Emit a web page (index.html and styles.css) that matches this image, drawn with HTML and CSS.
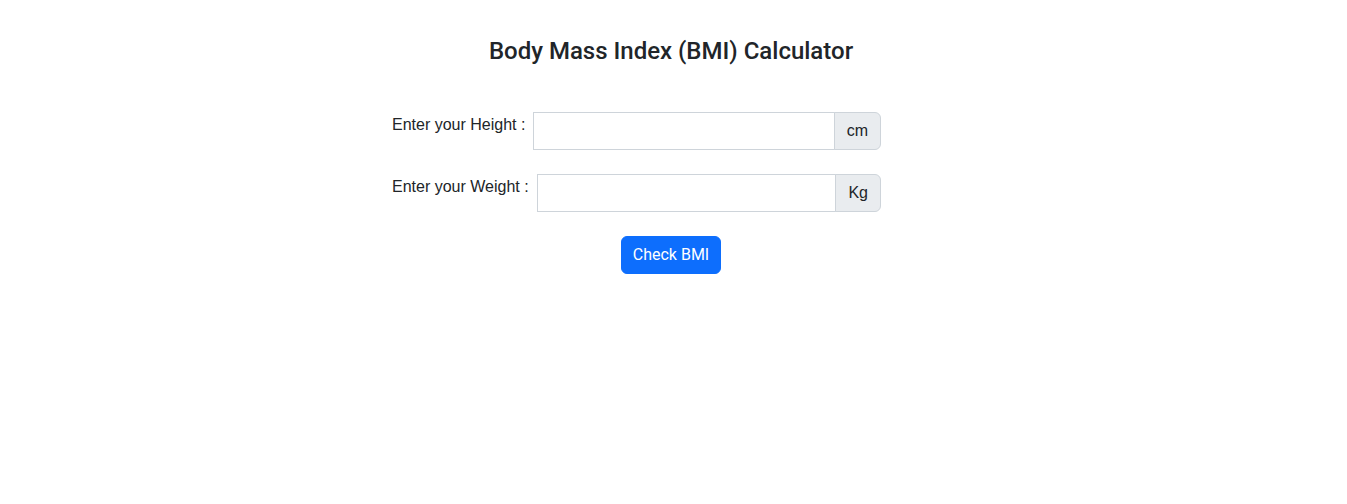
FILE: index.html
```html
<!DOCTYPE html>
<html lang="en">
<head>
<meta charset="utf-8">
<title>BMI Calculator</title>
<link rel="stylesheet" href="styles.css">
</head>
<body>
<main class="page">
  <h4 class="title">Body Mass Index (BMI) Calculator</h4>
  <form class="bmi-form">
    <div class="field-row">
      <label class="field-label" for="height">Enter your Height :</label>
      <div class="input-group">
        <input class="form-control" id="height" type="text">
        <span class="addon">cm</span>
      </div>
    </div>
    <div class="field-row">
      <label class="field-label" for="weight">Enter your Weight :</label>
      <div class="input-group">
        <input class="form-control" id="weight" type="text">
        <span class="addon">Kg</span>
      </div>
    </div>
    <div class="actions">
      <button type="button" class="btn-primary">Check BMI</button>
    </div>
  </form>
</main>
</body>
</html>
```
FILE: styles.css
```css
* { box-sizing: border-box; }
html, body { margin: 0; background: #fff; }
body {
  font-family: "Liberation Sans", Arial, sans-serif;
  font-size: 16px;
  line-height: 1.5;
  color: #212529;
}
.page {
  padding-right: 5px;
}
.title {
  margin: 37px 0 0;
  text-align: center;
  font-family: Roboto, "Liberation Sans", sans-serif;
  font-weight: 500;
  font-size: 24px;
  line-height: 1.2;
  color: #212529;
}
.bmi-form {
  width: 558px;
  margin: 46px auto 0;
  padding-right: 69px;
}
.field-row {
  display: flex;
  align-items: flex-start;
  margin-bottom: 24px;
}
.field-label {
  padding-top: 1px;
  margin-right: 8px;
  white-space: nowrap;
}
.input-group {
  flex: 1;
  display: flex;
  height: 38px;
}
.form-control {
  flex: 1;
  min-width: 0;
  height: 38px;
  margin: 0;
  padding: 6px 12px;
  border: 1px solid #ced4da;
  border-radius: 0;
  font: inherit;
  color: #212529;
  background: #fff;
  outline: none;
}
.addon {
  display: flex;
  align-items: center;
  margin-left: -1px;
  padding: 6px 12px;
  background: #e9ecef;
  border: 1px solid #ced4da;
  border-radius: 0 6px 6px 0;
  color: #212529;
  white-space: nowrap;
}
.actions {
  text-align: center;
  padding-left: 69px;
}
.btn-primary {
  font-family: Roboto, "Liberation Sans", sans-serif;
  font-size: 16px;
  line-height: 1.5;
  padding: 6px 11px;
  color: #fff;
  background: #0d6efd;
  border: 1px solid #0d6efd;
  border-radius: 6px;
  cursor: pointer;
}
```
